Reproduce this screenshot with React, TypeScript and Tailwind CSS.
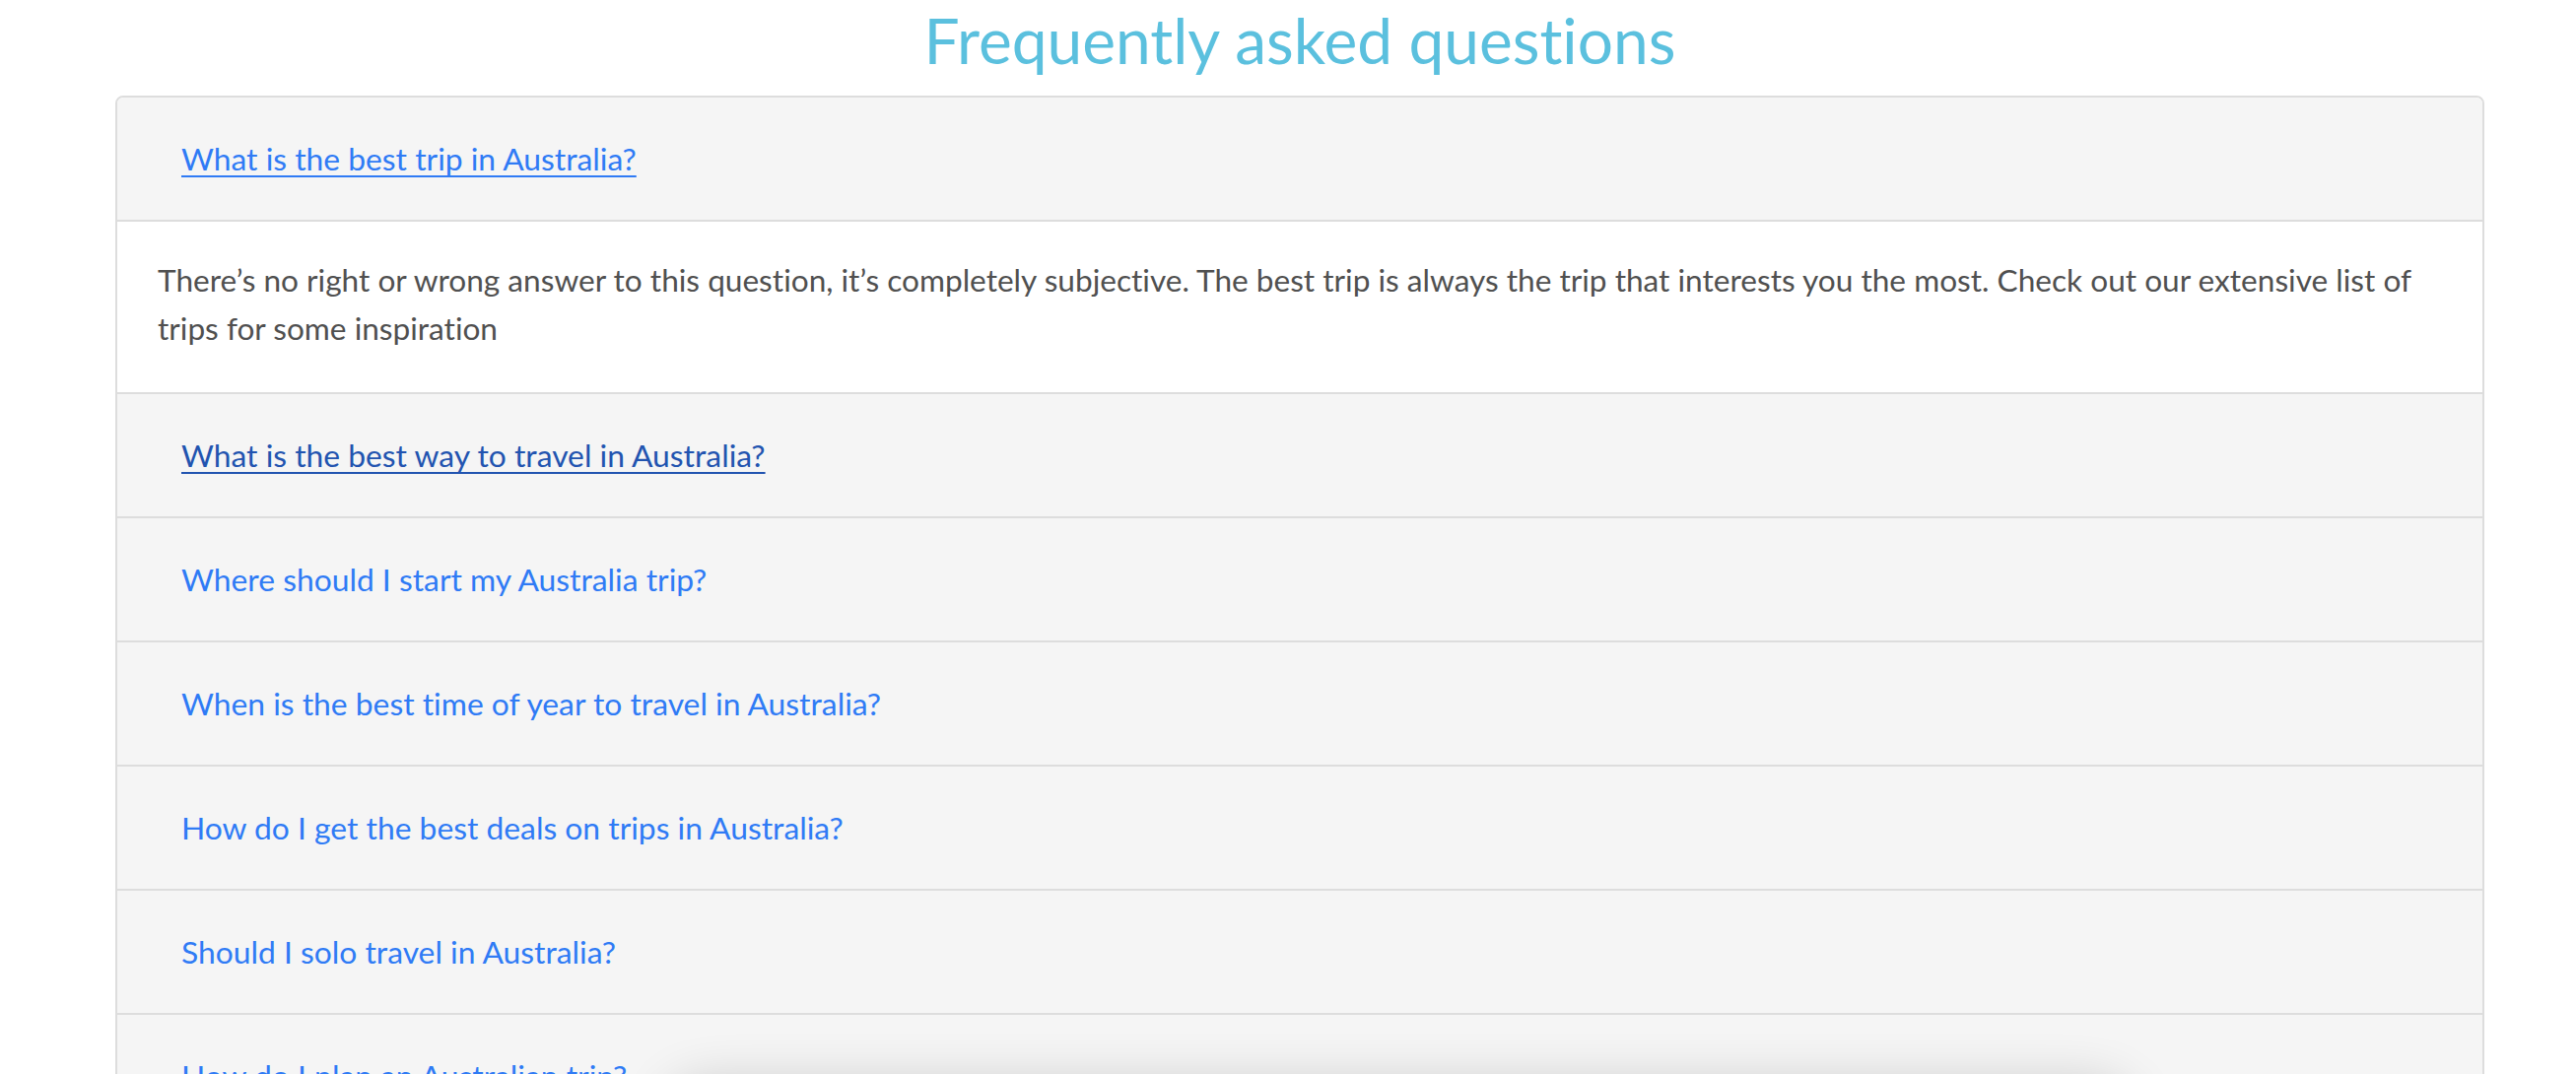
const questions = [
  "What is the best trip in Australia?",
  "What is the best way to travel in Australia?",
  "Where should I start my Australia trip?",
  "When is the best time of year to travel in Australia?",
  "How do I get the best deals on trips in Australia?",
  "Should I solo travel in Australia?",
  "How do I plan an Australian trip?",
  "Do I need a visa to visit Australia?",
]

function QuestionRow({ text, index }: { text: string; index: number }) {
  // first one is open (focused), second one is hovered
  const link =
    index === 0
      ? "text-[#2f7bf5] underline"
      : index === 1
        ? "text-[#2254b0] underline"
        : "text-[#2f7bf5] no-underline"
  return (
    <div
      className={`flex items-center bg-[#f5f5f5] pl-[65px] ${index > 0 ? "h-[126px] border-t-2 border-[#dddddd]" : "h-[124px]"}`}
    >
      <a href="#" className={`${link} text-[31.8px] leading-[46px] decoration-2 underline-offset-[5px]`}>
        {text}
      </a>
    </div>
  )
}

export default function App() {
  return (
    <div className="relative h-[1090px] overflow-hidden bg-white font-['Lato',_'Open_Sans',_sans-serif] [font-variant-ligatures:none]">
      <div className="pl-[117px] pr-[93px]">
        <h2 className="pt-[2px] mb-[18px] text-center text-[64px] leading-[77px] font-normal text-[#5bc0de]">
          Frequently asked questions
        </h2>
        <div className="overflow-hidden rounded-[8px] border-2 border-[#dddddd] bg-white">
          <QuestionRow text={questions[0]} index={0} />
          <div className="border-t-2 border-[#dddddd] bg-white pt-[35px] pb-[40px] pl-[41px] pr-[41px] text-[31.6px] leading-[49px] text-[#505050]">
            There’s no right or wrong answer to this question, it’s completely subjective. The best trip is always the trip
            that interests you the most. Check out our extensive list of trips for some inspiration
          </div>
          {questions.slice(1).map((q, i) => (
            <QuestionRow key={q} text={q} index={i + 1} />
          ))}
        </div>
      </div>
      {/* floating popup just below the fold, only its shadow shows */}
      <div className="absolute left-[680px] top-[1112px] h-[80px] w-[1480px] rounded-[40px] bg-white shadow-[0_-6px_50px_10px_rgba(0,0,0,0.16)]" />
    </div>
  )
}
